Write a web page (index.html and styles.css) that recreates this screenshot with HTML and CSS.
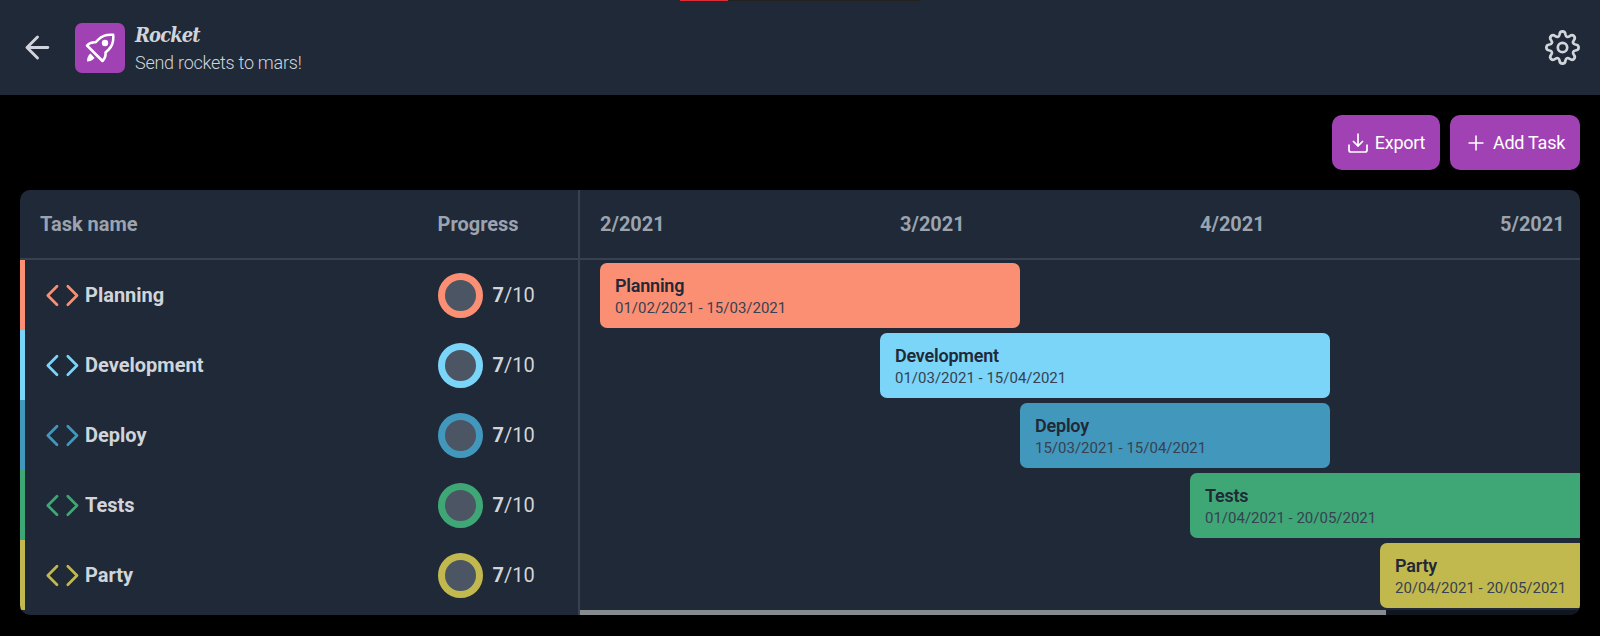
FILE: index.html
```html
<!DOCTYPE html>
<html lang="en">
<head>
<meta charset="utf-8">
<title>Rocket</title>
<link rel="stylesheet" href="styles.css">
</head>
<body>
<svg class="defs" width="0" height="0" aria-hidden="true">
  <symbol id="code" viewBox="0 0 34 24"><path d="M12 3.200 2.800 12.500l9.200 9.300M22.800 3.200 32 12.500l-9.200 9.300" fill="none" stroke="currentColor" stroke-width="2.700" stroke-linecap="round" stroke-linejoin="round"/></symbol>
</svg>
<header class="topbar">
  <div class="load-track"><div class="load-value"></div></div>
  <svg class="back" viewBox="0 0 24 24"><path d="M12 1.900 1.900 12l10.100 10.100M2.200 12H21.900" fill="none" stroke="currentColor" stroke-width="2.800" stroke-linecap="round" stroke-linejoin="round"/></svg>
  <div class="logo">
    <svg viewBox="0 0 30 30"><path d="M28.200 1.800C22 1.200 17.300 2.500 13.500 6.300L10.500 9.300C7 9 4.500 9.800 2 12.500L17.500 28C20 25.500 21 23 20.500 19.500L23.700 16.500C27.500 12.700 28.800 8 28.200 1.800Z" fill="none" stroke="#fff" stroke-width="2.500" stroke-linejoin="round"/><circle cx="20" cy="10" r="3.200" fill="#fff"/><path d="M5.500 20.500C3 22.500 2 25 2 28.500c3 0 5.500-1 7.500-3.500Z" fill="#fff"/></svg>
  </div>
  <div class="project">
    <h1>Rocket</h1>
    <p>Send rockets to mars!</p>
  </div>
  <svg class="gear" viewBox="-17.500 -17.500 35 35"><g fill="none" stroke="currentColor" stroke-width="2.700" stroke-linejoin="round"><circle r="4.700"/><path d="M-3-13C-2.500-17.200 2.500-17.200 3-13C3.400-10.500 5.100-9.800 7.100-11.300C10.400-14 14-10.400 11.300-7.100C9.800-5.100 10.500-3.400 13-3C17.200-2.500 17.200 2.500 13 3C10.500 3.400 9.800 5.100 11.300 7.100C14 10.400 10.400 14 7.100 11.300C5.100 9.800 3.400 10.500 3 13C2.500 17.200-2.500 17.200-3 13C-3.400 10.500-5.100 9.800-7.100 11.300C-10.400 14-14 10.400-11.300 7.100C-9.800 5.100-10.500 3.400-13 3C-17.200 2.500-17.200-2.500-13-3C-10.500-3.400-9.800-5.100-11.300-7.100C-14-10.400-10.400-14-7.100-11.300C-5.100-9.800-3.400-10.500-3-13Z"/></g></svg>
</header>
<main>
  <div class="actions">
    <button class="btn"><svg viewBox="0 0 20 20" width="20" height="20"><path d="M10 .5v12.500M5 8l5 5 5-5M1 11.500V17q0 2 2 2h14q2 0 2-2v-5.500" fill="none" stroke="currentColor" stroke-width="1.700"/></svg>Export</button>
    <button class="btn add"><svg viewBox="0 0 20 20" width="20" height="20"><path d="M10 2.500v15M2.500 10h15" fill="none" stroke="currentColor" stroke-width="1.600"/></svg>Add Task</button>
  </div>
  <section class="board">
    <div class="tasks">
      <div class="head"><span class="name">Task name</span><span>Progress</span></div>
      <div class="task orange"><svg class="code"><use href="#code"/></svg><span class="name">Planning</span><i class="ring"></i><span class="count"><b>7</b>/10</span></div>
      <div class="task sky"><svg class="code"><use href="#code"/></svg><span class="name">Development</span><i class="ring"></i><span class="count"><b>7</b>/10</span></div>
      <div class="task blue"><svg class="code"><use href="#code"/></svg><span class="name">Deploy</span><i class="ring"></i><span class="count"><b>7</b>/10</span></div>
      <div class="task green"><svg class="code"><use href="#code"/></svg><span class="name">Tests</span><i class="ring"></i><span class="count"><b>7</b>/10</span></div>
      <div class="task yellow"><svg class="code"><use href="#code"/></svg><span class="name">Party</span><i class="ring"></i><span class="count"><b>7</b>/10</span></div>
    </div>
    <div class="timeline">
      <div class="head months"><span>2/2021</span><span>3/2021</span><span>4/2021</span><span>5/2021</span></div>
      <div class="lane"><div class="bar orange" style="margin-left:0px;width:420px"><b>Planning</b><span>01/02/2021 - 15/03/2021</span></div></div>
      <div class="lane"><div class="bar sky" style="margin-left:280px;width:450px"><b>Development</b><span>01/03/2021 - 15/04/2021</span></div></div>
      <div class="lane"><div class="bar blue" style="margin-left:420px;width:310px"><b>Deploy</b><span>15/03/2021 - 15/04/2021</span></div></div>
      <div class="lane"><div class="bar green" style="margin-left:590px;width:490px"><b>Tests</b><span>01/04/2021 - 20/05/2021</span></div></div>
      <div class="lane"><div class="bar yellow" style="margin-left:780px;width:300px"><b>Party</b><span>20/04/2021 - 20/05/2021</span></div></div>
      <div class="scroll"><div class="thumb"></div></div>
    </div>
  </section>
</main>
</body>
</html>
```
FILE: styles.css
```css
* { box-sizing: border-box; }
body { margin: 0; height: 636px; overflow: hidden; background: #000; color: #d1d5db; font-family: Roboto, sans-serif; }
.defs { position: absolute; }
.topbar { position: relative; display: flex; align-items: center; height: 95px; padding: 0 20px 0 25px; background: #1f2937; }
.load-track { position: absolute; top: 0; left: 680px; width: 241px; height: 1px; background: #222; }
.load-value { width: 48px; height: 1px; background: #dc2c35; }
.back { width: 25px; height: 25px; margin-right: 25px; overflow: visible; }
.logo { display: grid; place-items: center; width: 50px; height: 50px; margin-right: 10px; border-radius: 7px; background: #a142b4; }
.logo svg { width: 30px; height: 30px; }
.project { flex: 1; padding-top: 3px; }
h1 { margin: 0; font: italic bold 20px/25px "DejaVu Serif Condensed", "DejaVu Serif", serif; letter-spacing: -.9px; }
p { margin: 3px 0 0; font-size: 18px; font-weight: 300; line-height: 24px; letter-spacing: -.25px; }
.gear { width: 35px; height: 35px; overflow: visible; }
.actions { display: flex; justify-content: flex-end; gap: 10px; padding: 20px; }
.btn { display: flex; align-items: center; justify-content: center; gap: 7px; width: 108px; height: 55px; padding: 0 0 0 1px; border: 0; border-radius: 10px; background: #a142b4; color: #fff; font: 400 18px Roboto, sans-serif; letter-spacing: -.25px; }
.btn.add { width: 130px; padding-left: 1px; }
.board { display: flex; height: 425px; margin: 0 20px; border-radius: 10px; background: #1f2937; overflow: hidden; }
.tasks { width: 560px; flex: none; border-right: 2px solid #374151; }
.timeline { flex: 1; min-width: 0; overflow: hidden; }
.head { display: flex; align-items: center; height: 70px; padding-left: 20px; border-bottom: 2px solid #374151; color: #9ca3af; font-size: 20px; font-weight: 700; }
.head .name { width: 397.5px; }
.months span { width: 300px; flex: none; }
.task { display: flex; align-items: center; height: 70px; padding-left: 20px; border-left: 5px solid var(--tone); font-size: 20px; }
.task .name { width: 353px; font-weight: 700; }
.code { width: 34px; height: 24px; margin: 0 6px 0 0; color: var(--tone); }
.ring { width: 45px; height: 45px; margin-right: 9.5px; border: 7px solid var(--tone); border-radius: 50%; background: #4b5563; }
.orange { --tone: #fb8f74; }
.sky { --tone: #7ad5f9; }
.blue { --tone: #4297bc; }
.green { --tone: #3fa776; }
.yellow { --tone: #c2b94e; }
.lane { height: 70px; padding: 3px 0 2px 20px; }
.bar { display: flex; flex-direction: column; height: 65px; padding: 12px 0 0 15px; border-radius: 7px; background: var(--tone); color: #1f2937; }
.bar b { font-size: 18px; font-weight: 600; line-height: 22px; letter-spacing: -.22px; }
.bar span { color: #374151; font-size: 15px; font-weight: 400; line-height: 22px; }
.scroll { height: 5px; background: #10161d; }
.thumb { width: 806px; height: 5px; background: #868b8e; }
```
